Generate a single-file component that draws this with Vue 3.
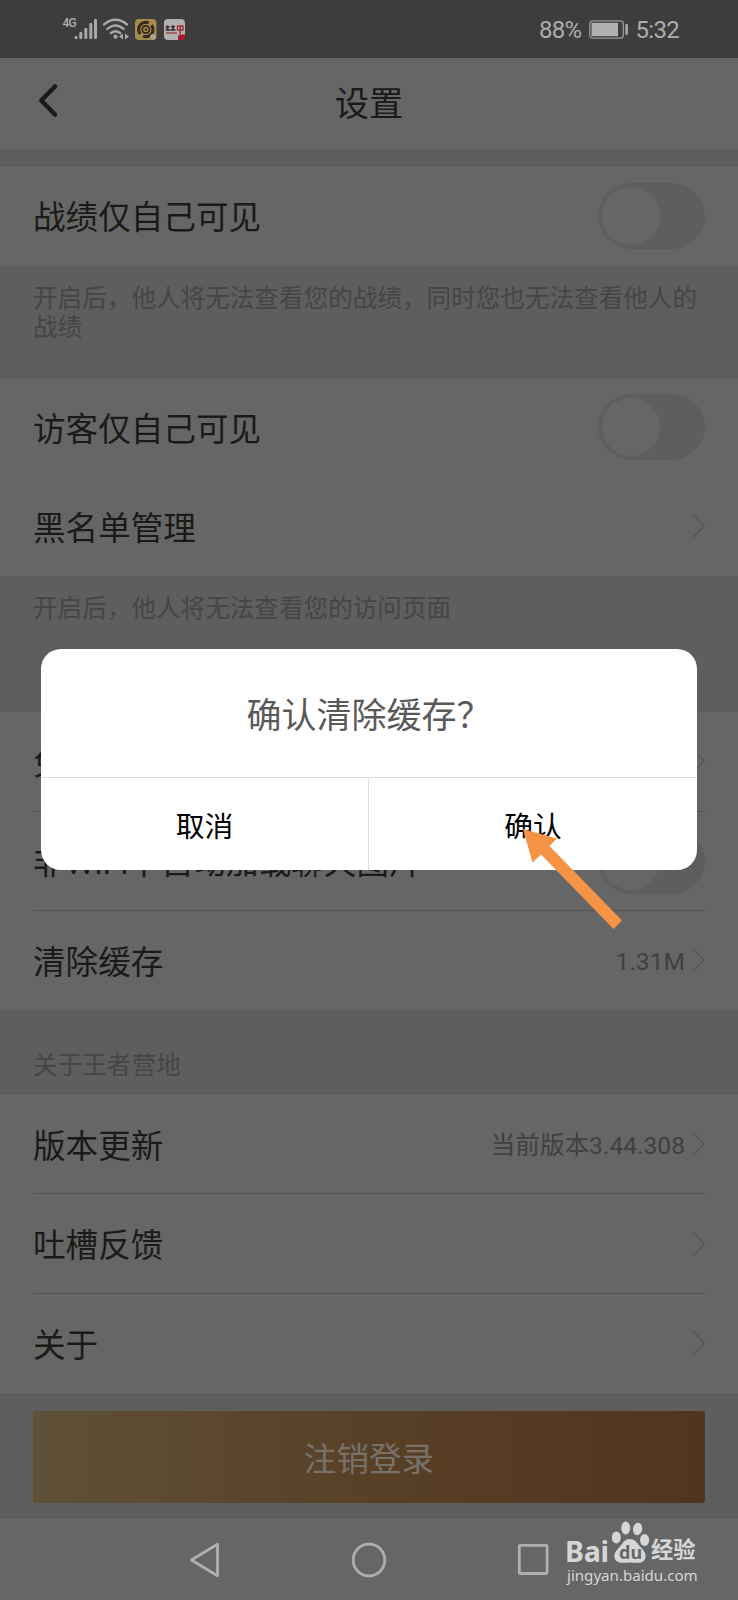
<script setup>
const privacy = [{ label: '战绩仅自己可见', toggle: true }]
const visitors = [
  { label: '访客仅自己可见', toggle: true },
  { label: '黑名单管理' },
]
const general = [
  { label: '免打扰' },
  { label: '非WiFi下自动加载聊天图片', toggle: true },
  { label: '清除缓存', value: '1.31M' },
]
const about = [
  { label: '版本更新', value: '当前版本3.44.308' },
  { label: '吐槽反馈' },
  { label: '关于' },
]
const sections = [
  { rows: privacy, note: '开启后，他人将无法查看您的战绩，同时您也无法查看他人的战绩', kind: 'note-two' },
  { rows: visitors, note: '开启后，他人将无法查看您的访问页面', kind: 'note-tall', plain: true },
  { rows: general, note: '关于王者营地', kind: 'note-title' },
  { rows: about },
]
</script>

<template>
  <div class="screen">
    <div class="status">
      <svg class="signal" width="125" height="30" viewBox="0 0 125 30">
        <g fill="#a9a9a9">
          <rect x="13.500" y="21" width="3" height="3" rx="1" />
          <rect x="18.300" y="17" width="3" height="7" rx="1" />
          <rect x="23.300" y="13" width="3" height="11" rx="1" />
          <rect x="28.300" y="8" width="3" height="16" rx="1" />
          <rect x="33" y="4" width="3" height="20" rx="1" />
        </g>
        <g fill="none" stroke="#a9a9a9" stroke-width="2.300" stroke-linecap="round">
          <path d="M43 9.500Q54.500 0 66 9.500" />
          <path d="M46.300 14Q54.500 7 62.700 14" />
          <path d="M49.800 18.200Q54.500 14.200 59.200 18.200" />
        </g>
        <circle cx="54.500" cy="21.700" r="2.100" fill="#a9a9a9" />
        <path d="M62 18.500v6l-4-3zM64 18.500v6l4-3z" fill="#a9a9a9" />
        <rect x="74" y="4" width="21.500" height="21" rx="4" fill="#a58b4c" />
        <circle cx="84.800" cy="14.500" r="7.200" fill="none" stroke="#34291a" stroke-width="3" stroke-dasharray="19 3.600" stroke-dashoffset="5" />
        <circle cx="84.800" cy="14.500" r="3.600" fill="none" stroke="#34291a" stroke-width="1.800" />
        <circle cx="84.800" cy="14.500" r="1.200" fill="#34291a" />
        <circle cx="92" cy="22" r="3" fill="#a9a28c" />
        <rect x="103" y="4" width="21" height="21" rx="4" fill="#b3b0b0" />
        <path d="M104.500 12h4M104.500 15h4.500M106.500 10.500v5M110 11.500h4M109.500 15h5M112 10.500v5" stroke="#332a2a" stroke-width="1.700" />
        <path d="M116.500 11h5.500v4h-5.500zM119.300 10v9" stroke="#a03038" stroke-width="1.400" fill="none" />
        <path d="M105 18h11" stroke="#a03038" stroke-width="1.200" fill="none" />
        <path d="M117 25v-3.500q0-2 2-2h5v3q0 2.500-2.500 2.500z" fill="#a51d31" />
      </svg>
      <span class="net">4G</span>
      <div class="status-right">
        <span class="percent">88%</span>
        <svg width="40" height="20" viewBox="0 0 40 20">
          <rect x="0.800" y="0.800" width="33.500" height="17.400" rx="3" fill="none" stroke="#999" stroke-width="1.300" />
          <rect x="2.500" y="2.800" width="26.500" height="13.400" fill="#b0b0b0" />
          <rect x="36.300" y="4" width="2.600" height="11" rx="1" fill="#a9a9a9" />
        </svg>
        <span class="time">5:32</span>
      </div>
    </div>

    <header class="header">
      <svg class="back" width="22" height="36" viewBox="0 0 22 36">
        <path d="M18 3.500L4.300 17.500L18 31.500" fill="none" stroke="#1b1a18" stroke-width="4.600" stroke-linecap="round" stroke-linejoin="round" />
      </svg>
      <h1>设置</h1>
    </header>
    <div class="spacer"></div>

    <template v-for="(s, i) in sections" :key="i">
      <section :class="['group', { plain: s.plain }]">
        <div v-for="r in s.rows" :key="r.label" class="row">
          <span class="label">{{ r.label }}</span>
          <span v-if="r.toggle" class="toggle"><i></i></span>
          <span v-else class="more">
            <span v-if="r.value" class="value">{{ r.value }}</span>
            <svg width="14" height="26" viewBox="0 0 14 26">
              <path d="M1.800 1.300L13.200 13L1.800 24.700" fill="none" stroke="#565656" stroke-width="1.500" />
            </svg>
          </span>
        </div>
      </section>
      <div v-if="s.note" :class="['note', s.kind]">{{ s.note }}</div>
    </template>

    <div class="footer"><button class="logout">注销登录</button></div>

    <nav class="nav">
      <svg width="738" height="81" viewBox="0 0 738 81">
        <g fill="none" stroke="#afafaf" stroke-width="2.800" stroke-linejoin="round">
          <path d="M191.500 41L217.500 25.300V56.700Z" />
          <circle cx="369" cy="41" r="15.800" />
          <rect x="519.300" y="26.300" width="27.800" height="28.200" rx="1" />
        </g>
      </svg>
    </nav>

    <div class="dialog">
      <p>确认清除缓存？</p>
      <div class="actions">
        <button>取消</button>
        <button>确认</button>
      </div>
    </div>

    <svg class="arrow" width="100" height="102" viewBox="0 0 100 102">
      <path d="M0 0L34 9.500L26.500 17L99 91.500L90.500 100L18 25.500L9.500 33.500Z" fill="#f59447" />
    </svg>

    <div class="watermark">
      <span class="bai">Bai</span>
      <svg class="paw" width="40" height="43" viewBox="0 0 40 43">
        <g fill="#d6d6d6">
          <ellipse cx="5.300" cy="16.500" rx="4.500" ry="6" />
          <ellipse cx="14.700" cy="7" rx="4.500" ry="6.500" />
          <ellipse cx="26.600" cy="8" rx="4.600" ry="6.200" transform="rotate(8 26.600 8)" />
          <ellipse cx="33.600" cy="19" rx="4.600" ry="6" />
          <path d="M19 18c5 0 7 4 10 7.500c4 4 7 8 5 12.500c-2 4.500-7 4-15 3.500c-7 .500-13 1-15-3.500c-2-5 1-8 5-12.500c3-4 5-7.500 10-7.500z" />
        </g>
      </svg>
      <span class="du">du</span>
      <span class="exp">经验</span>
      <span class="site">jingyan.baidu.com</span>
    </div>
  </div>
</template>

<style>
body { margin: 0; background: #666; }
</style>

<style scoped>
.screen {
  position: relative;
  width: 738px;
  height: 1600px;
  overflow: hidden;
  background: #5e5e5e;
  color: #1b1a18;
  font-family: Roboto, "Noto Sans CJK SC", sans-serif;
}
.status {
  position: relative;
  display: flex;
  justify-content: space-between;
  box-sizing: border-box;
  height: 58px;
  padding: 15px 59px 0 61px;
  background: #3d3d3d;
  color: #adadad;
}
.net { position: absolute; left: 62.500px; top: 16px; font-size: 12px; line-height: 14px; font-weight: 500; letter-spacing: -0.700px; }
.status-right { display: flex; align-items: center; height: 30px; font-size: 24px; line-height: 30px; letter-spacing: -0.700px; }
.percent { margin-right: 7px; }
.time { margin-left: 7px; }
.header {
  display: flex;
  align-items: center;
  justify-content: center;
  position: relative;
  height: 90.500px;
  background: #666;
}
.back { position: absolute; left: 37px; top: 25px; }
h1 { margin: 0; padding-top: 1px; font-size: 34.300px; line-height: 50px; font-weight: 400; }
.spacer { height: 18px; }
.group { background: #666; }
.row {
  display: flex;
  align-items: center;
  justify-content: space-between;
  box-sizing: border-box;
  height: 99.700px;
  margin: 0 33px;
  border-bottom: 1px solid #525252;
}
.row:last-child { border-bottom-color: transparent; height: 99px; }
.plain .row { border-bottom-color: transparent; height: 98.700px; }
.label { padding-top: 5px; font-size: 32.600px; line-height: 48px; white-space: nowrap; }
.toggle { width: 107px; height: 66px; border-radius: 33px; background: #5e5e5e; }
.toggle i { display: block; width: 58px; height: 58px; margin: 4px; border-radius: 50%; background: #666; }
.more { display: flex; align-items: center; gap: 6px; }
.value { padding-top: 3px; font-size: 24.600px; line-height: 36px; color: #404040; }
.note { box-sizing: border-box; padding: 19.500px 33px 0; font-size: 24.600px; line-height: 28.500px; color: #454545; }
.note-two { height: 113px; }
.note-tall { height: 136px; }
.note-title { height: 84.500px; padding-top: 42px; }
.footer { box-sizing: border-box; height: 126px; padding: 17.500px 33px 0; }
button { border: 0; padding: 0; font-family: inherit; background: none; }
.logout {
  display: block;
  width: 672px;
  height: 92px;
  border-radius: 3px;
  background: linear-gradient(90deg, #5f5038, #573f25 55%, #51351f);
  color: #77716a;
  font-size: 32.600px;
}
.nav { height: 82px; background: #666; }
.dialog {
  position: absolute;
  left: 41px;
  top: 649px;
  width: 656px;
  height: 221px;
  border-radius: 20px;
  overflow: hidden;
  background: #fff;
}
.dialog p { margin: 0; height: 128px; line-height: 135px; text-align: center; font-size: 35px; color: #595959; }
.actions { display: flex; height: 92px; border-top: 1px solid #dedede; }
.actions button { width: 327px; font-size: 28.800px; color: #000; }
.actions button + button { width: 329px; border-left: 1px solid #dedede; }
.arrow { position: absolute; left: 523px; top: 829px; }
.watermark { position: absolute; left: 566px; top: 1520px; width: 140px; height: 70px; color: #d6d6d6; }
.watermark > * { position: absolute; white-space: nowrap; }
.bai { left: -1px; top: 16px; font: 700 28.500px/30px "Noto Sans", sans-serif; letter-spacing: -0.300px; }
.paw { left: 45px; top: 1px; }
.du { left: 53px; top: 21px; color: #666; font: 700 18px/22px "Noto Sans", sans-serif; }
.exp { left: 85px; top: 16px; font-size: 22.300px; line-height: 28px; font-weight: 700; }
.site { left: 1px; top: 45px; font: 400 15.100px/20px "Noto Sans", sans-serif; }
</style>
